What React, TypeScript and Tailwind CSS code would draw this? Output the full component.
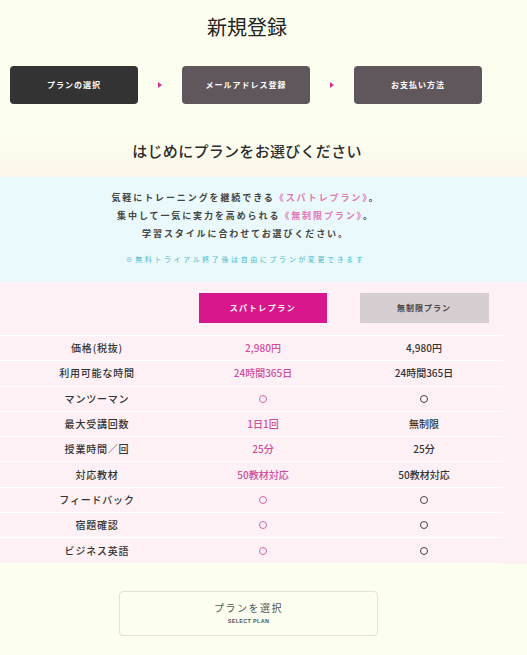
const sans = "font-['Noto_Sans_CJK_JP','Noto_Sans',sans-serif]";

const rows: { label: string; a: string; b: string }[] = [
  { label: '価格(税抜)', a: '2,980円', b: '4,980円' },
  { label: '利用可能な時間', a: '24時間365日', b: '24時間365日' },
  { label: 'マンツーマン', a: 'o', b: 'o' },
  { label: '最大受講回数', a: '1日1回', b: '無制限' },
  { label: '授業時間／回', a: '25分', b: '25分' },
  { label: '対応教材', a: '50教材対応', b: '50教材対応' },
  { label: 'フィードバック', a: 'o', b: 'o' },
  { label: '宿題確認', a: 'o', b: 'o' },
  { label: 'ビジネス英語', a: 'o', b: 'o' },
];

function StepArrow() {
  return (
    <div className="w-[44px] flex items-center justify-center">
      <div className="w-0 h-0 border-y-[3px] border-y-transparent border-l-[4px] border-l-[#d6338a]" />
    </div>
  );
}

function Cell({ value, pink }: { value: string; pink?: boolean }) {
  if (value === 'o') {
    return (
      <span
        className={`inline-block w-[8px] h-[8px] rounded-full border-[1.5px] ${
          pink ? 'border-[#d267aa]' : 'border-[#444]'
        }`}
      />
    );
  }
  return <span>{value}</span>;
}

export default function App() {
  return (
    <div className={`w-full min-h-screen bg-[#fcfeef] text-[#333] ${sans}`}>
      {/* Title + steps */}
      <div className="pt-[16px] pb-[21px]">
        <h1 className="pr-[33px] text-center text-[20px] leading-[24px] font-normal font-['Liberation_Serif','Noto_Sans_CJK_JP',serif] text-[#222]">
          新規登録
        </h1>
        <div className="mt-[26px] pl-[10px] flex">
          <div className="w-[128px] h-[38px] rounded-[4px] bg-[#333333] flex items-center justify-center text-white text-[8px] font-bold tracking-[1px]">
            プランの選択
          </div>
          <StepArrow />
          <div className="w-[128px] h-[38px] rounded-[4px] bg-[#5f575c] flex items-center justify-center text-white text-[8px] font-bold tracking-[1px]">
            メールアドレス登録
          </div>
          <StepArrow />
          <div className="w-[128px] h-[38px] rounded-[4px] bg-[#5f575c] flex items-center justify-center text-white text-[8px] font-bold tracking-[1px]">
            お支払い方法
          </div>
        </div>
      </div>

      {/* Heading */}
      <div className="h-[52px] bg-gradient-to-b from-[#fcfeef] via-[#fcfcee] to-[#fdf5ea] flex items-start justify-center pt-[16px] pr-[33px]">
        <h2 className="text-[15px] leading-[20px] font-medium tracking-[0.3px] text-[#2b2b2b]">
          はじめにプランをお選びください
        </h2>
      </div>

      {/* Intro */}
      <div className="bg-[#eaf9fb] pt-[12px] pb-[17px] pr-[36px] text-center">
        <p className="text-[9px] leading-[18px] font-bold tracking-[1.9px] text-[#444]">
          気軽にトレーニングを継続できる<span className="text-[#e27ab8]">《スパトレプラン》</span>。
          <br />
          集中して一気に実力を高められる<span className="text-[#e27ab8]">《無制限プラン》</span>。
          <br />
          学習スタイルに合わせてお選びください。
        </p>
        <p className="mt-[10px] text-[7px] leading-[12px] tracking-[2.6px] text-[#4bb9cc]">
          ※無料トライアル終了後は自由にプランが変更できます
        </p>
      </div>

      {/* Comparison table */}
      <div className="bg-[#fdf1f5]">
        <div className="w-[503px]">
          <div className="grid grid-cols-[194px_138px_171px] pt-[11px] pb-[12px] border-b border-white">
            <div />
            <div className="flex justify-center">
              <div className="w-[128px] h-[30px] bg-[#d7178b] text-white text-[8px] font-bold tracking-[1.5px] flex items-center justify-center">
                スパトレプラン
              </div>
            </div>
            <div className="flex justify-center pl-[13px]">
              <div className="w-[129px] h-[30px] bg-[#d6cdd0] text-[#444] text-[8px] font-bold tracking-[1px] flex items-center justify-center">
                無制限プラン
              </div>
            </div>
          </div>
          {rows.map((r) => (
            <div
              key={r.label}
              className="grid grid-cols-[194px_138px_171px] h-[25.3px] border-b border-white items-center text-[10px] leading-[14px]"
            >
              <div className="text-center font-medium tracking-[0.8px] text-[#333]">{r.label}</div>
              <div className="flex justify-center font-medium text-[#cf4ea0]">
                <Cell value={r.a} pink />
              </div>
              <div className="flex justify-center pl-[13px] font-medium text-[#333]">
                <Cell value={r.b} />
              </div>
            </div>
          ))}
        </div>
      </div>

      {/* Select button */}
      <div className="pt-[27px] pb-[20px] pl-[119px]">
        <button className="w-[259px] h-[45px] rounded-[4px] border border-[#e2e3d4] bg-[#fcfeef] flex flex-col items-center justify-center">
          <span className="text-[10px] leading-[14px] tracking-[1.5px] text-[#555]">プランを選択</span>
          <span className="mt-[2px] text-[5.5px] leading-[8px] font-bold tracking-[0.3px] text-[#555] font-['Liberation_Sans_Narrow','Liberation_Sans',sans-serif]">
            SELECT PLAN
          </span>
        </button>
      </div>
    </div>
  );
}
